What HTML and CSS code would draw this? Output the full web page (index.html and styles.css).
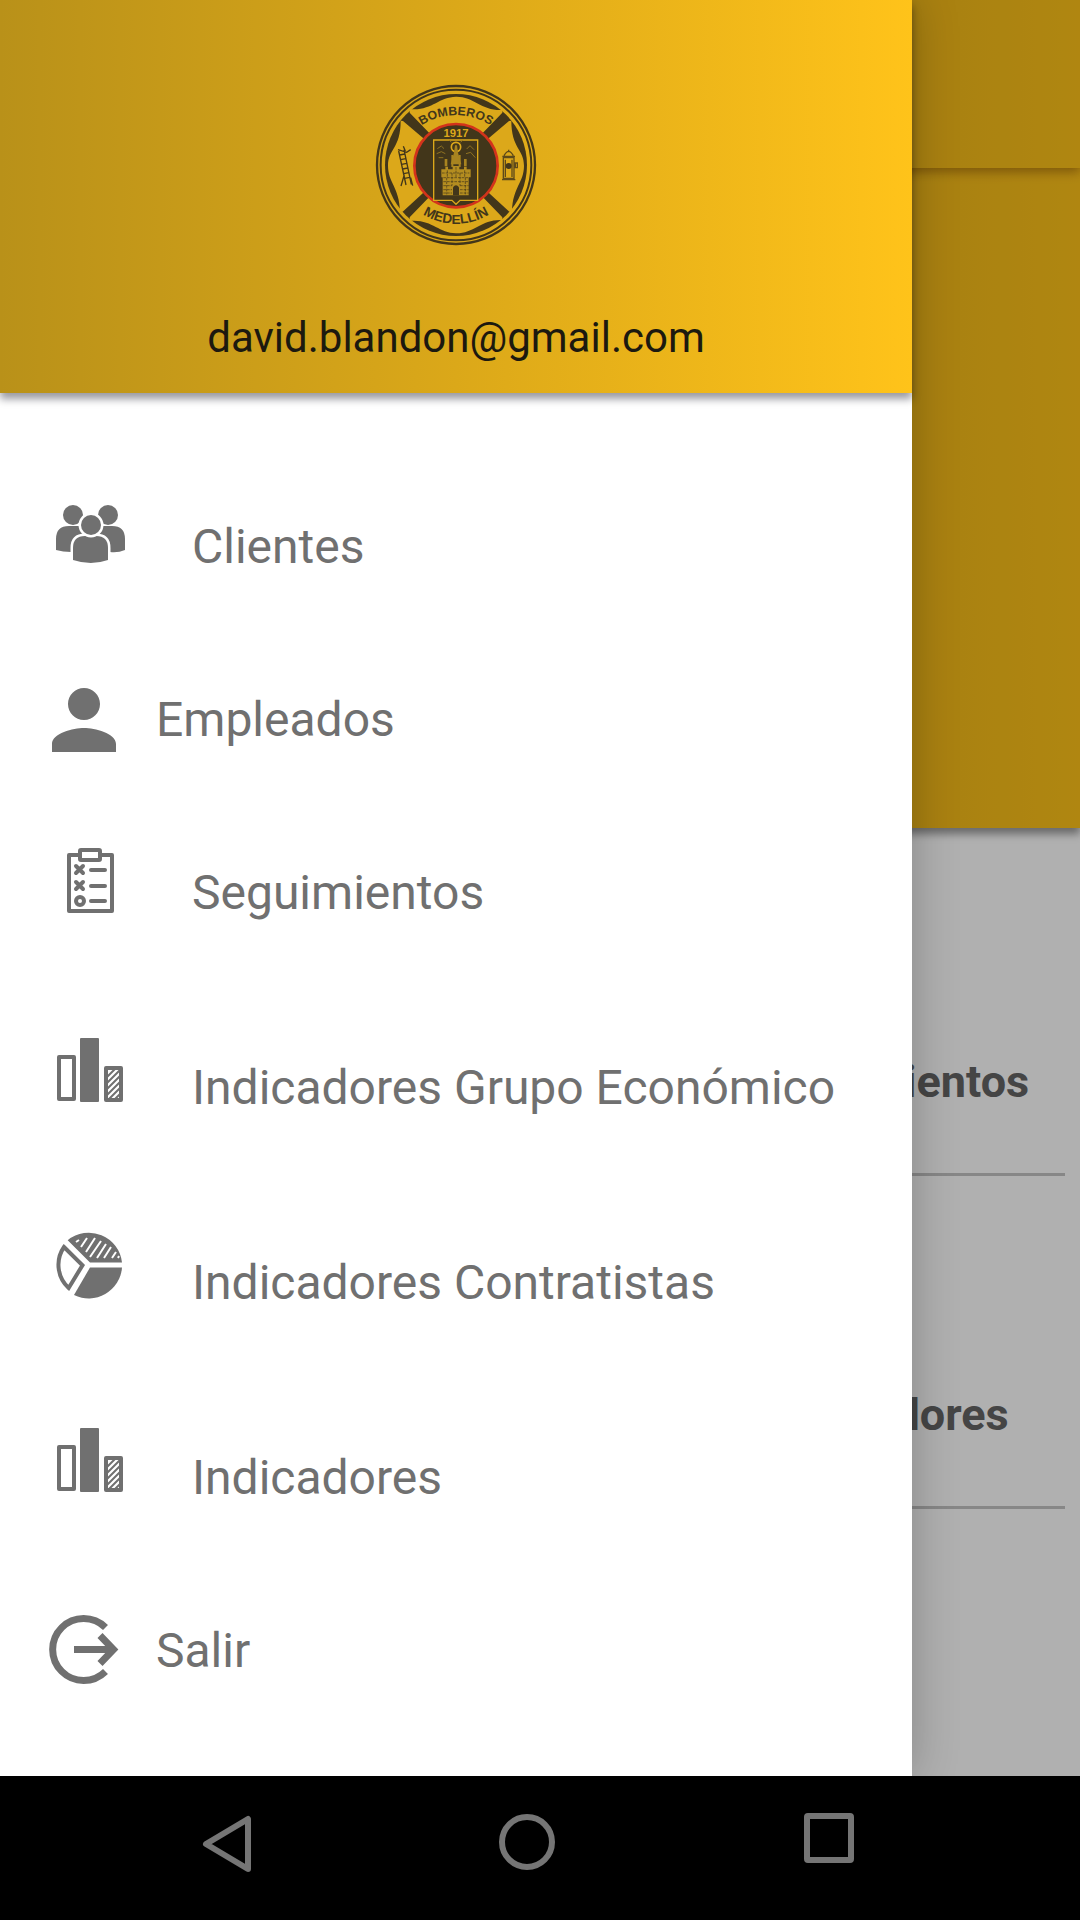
FILE: index.html
```html
<!DOCTYPE html>
<html lang="es">
<head>
    <meta charset="UTF-8">
    <meta name="viewport" content="width=device-width, initial-scale=1.0">
    <title>Bomberos Medellín</title>
    <link rel="stylesheet" href="styles.css">
</head>
<body>
    <svg class="sprite" aria-hidden="true">
        <symbol id="icon-bars" viewBox="0 -3 96 104">
            <rect x="17" y="18" width="15" height="42" fill="none" stroke="currentColor" stroke-width="4" stroke-linejoin="round"/>
            <rect x="38" y="-1" width="19" height="64" rx="1" fill="currentColor"/>
            <rect x="64" y="29" width="15" height="32" fill="none" stroke="currentColor" stroke-width="4" stroke-linejoin="round"/>
            <path d="M65 38l8-8M65 44l13-13M65 50l13-13M65 56l13-13M66 61l12-12M72 61l6-6" stroke="currentColor" stroke-width="2"/>
        </symbol>
    </svg>

    <div class="app">
        <main class="page">
            <div class="toolbar"></div>
            <div class="hero"></div>
            <div class="cards">
                <div class="card">Seguimientos</div>
                <div class="card">Indicadores</div>
            </div>
        </main>
        <div class="scrim"></div>

        <aside class="drawer">
            <header class="drawer-header">
                <svg class="logo" viewBox="45 41 486 486" role="img" aria-label="Bomberos Medellín">
                    <defs>
                        <path id="arc-top" d="M176 171A190 190 0 0 1 400 171"/>
                        <path id="arc-bottom" d="M174 422A188 188 0 0 0 402 422"/>
                    </defs>
                    <circle cx="288" cy="284" r="237" fill="none" stroke="#42361a" stroke-width="7"/>
                    <circle cx="288" cy="284" r="226" fill="none" stroke="#42361a" stroke-width="6"/>
                    <circle cx="288" cy="284" r="213" fill="#42361a"/>
                    <g fill="#dca81a">
                        <path d="M150 116C215 122 235 80 288 79S365 122 427 119L427 127 369 187H207L149 127Z"/>
                        <path d="M150 452C215 446 235 488 288 489S365 446 427 449L427 441 369 381H207L149 441Z"/>
                        <path d="M122 151C122 235 84 235 84 286S118 350 120 423L128 424 190 367V204L129 152Z"/>
                        <path d="M454 151C454 235 492 235 492 286S458 350 456 423L448 424 386 367V204L447 152Z"/>
                    </g>
                    <circle cx="288" cy="286" r="125" fill="#42361a" stroke="#d3331b" stroke-width="8"/>
                    <g class="logo-text">
                        <text font-size="37"><textPath href="#arc-top" startOffset="50%" text-anchor="middle">BOMBEROS</textPath></text>
                        <text font-size="41"><textPath href="#arc-bottom" startOffset="50%" text-anchor="middle">MEDELLÍN</textPath></text>
                        <text class="logo-year" x="288" y="201" font-size="34" text-anchor="middle">1917</text>
                    </g>
                    <!-- shield with the tower -->
                    <path d="M221 209H353V390H300L288 402 276 390H221Z" fill="#42361a" stroke="#dca81a" stroke-width="4"/>
                    <circle cx="288" cy="230" r="14" fill="none" stroke="#dca81a" stroke-width="5"/>
                    <path d="M285 225h6l3 22 10 35h-32l10-35z" fill="#a88420"/>
                    <path d="M232 235l12-8 8 8M230 250l14-6 12 6M236 262l14 0M320 236l10-10 12 12M318 250l14-4 14 16M302 216l5-6M274 216l-5-6" fill="none" stroke="#8f7222" stroke-width="3"/>
                    <path d="M244 297h12v-8h8v8h14v-10h20v10h14v-8h8v8h12v24h-6v54h-78v-54h-4z" fill="#b48d20"/>
                    <path d="M254 266h8v22h-8zM274 254h6v36h-6zM296 254h6v36h-6zM312 266h8v22h-8z" fill="#a88420"/>
                    <path d="M279 375v-24q9-12 18 0v24z" fill="#42361a"/>
                    <path d="M246 308h82M250 322h76M250 334h76M250 346h26M300 346h26M250 358h26M300 358h26M250 368h26M300 368h26M262 300v20M276 308v38M300 308v38M314 300v20M260 322v50M316 322v50M288 290v30" stroke="#42361a" stroke-width="2" stroke-dasharray="8 3"/>
                    <!-- ladder -->
                    <path d="M116 242l22 102M132 238l22 104M119 254l15-3M122 268l15-3M125 282l15-3M128 296l15-3M131 310l15-3M134 324l15-3M123 347l10-34M114 238l26 8 12-8M130 228l6 14M158 346l-6-24" fill="none" stroke="#42361a" stroke-width="4"/>
                    <!-- hydrant -->
                    <path d="M430 262h32v62h-32zM426 328h40M427 258h38M432 256q14-26 28 0M446 238v8M466 278h6v14h-6zM436 268v52M456 268v52" fill="none" stroke="#5d4a1a" stroke-width="4"/>
                    <circle cx="446" cy="287" r="9" fill="#42361a"/>
                </svg>
                <p class="email">david.blandon@gmail.com</p>
            </header>

            <nav class="menu">
                <a class="item" href="#">
                    <svg class="icon" viewBox="0 -3 96 104" fill="currentColor">
                        <circle cx="31" cy="17" r="10"/>
                        <circle cx="66" cy="17" r="10"/>
                        <path d="M14 52V41Q14 28 27 28H70Q83 28 83 41V52Q76 55 68 54H29Q21 54 14 52Z"/>
                        <path d="M31 62V50Q31 38 43 38H54Q66 38 66 50V62Q49 68 31 62Z" stroke="#fff" stroke-width="5" paint-order="stroke"/>
                        <circle cx="49" cy="27" r="10" stroke="#fff" stroke-width="5" paint-order="stroke"/>
                    </svg>
                    Clientes
                </a>
                <a class="item small" href="#">
                    <svg class="icon" viewBox="3 3 18 18" fill="currentColor">
                        <path d="M12 12c2.21 0 4-1.79 4-4s-1.79-4-4-4-4 1.79-4 4 1.79 4 4 4zm0 2c-2.67 0-8 1.34-8 4v2h16v-2c0-2.66-5.33-4-8-4z"/>
                    </svg>
                    Empleados
                </a>
                <a class="item" href="#">
                    <svg class="icon" viewBox="0 -3 96 104" fill="none" stroke="currentColor" stroke-width="4" stroke-linecap="round" stroke-linejoin="round">
                        <path d="M38 11H27V67H70V11H59"/>
                        <rect x="38" y="6" width="20" height="10" rx="1"/>
                        <path d="M34 22l7 7M41 22l-7 7M34 38l7 7M41 38l-7 7M49 26H63M49 42H63M49 57H63"/>
                        <circle cx="38" cy="57" r="4"/>
                    </svg>
                    Seguimientos
                </a>
                <a class="item" href="#">
                    <svg class="icon"><use href="#icon-bars"/></svg>
                    Indicadores Grupo Económico
                </a>
                <a class="item" href="#">
                    <svg class="icon" viewBox="0 -3 96 104" fill="currentColor">
                        <path d="M48 33.500H80A33.400 33.400 0 0 1 32 61Z"/>
                        <path d="M25.700 6.200A33.400 33.400 0 0 1 80 28.500H48Z"/>
                        <path d="M34 8l3-2M39 13l6-9M44 18l9-14M48 23l11-16M55 24l9-14M62 24l7-11M70 24l4-6M76 24l1-2" stroke="#fff" stroke-width="2"/>
                        <path d="M22 13L40.500 31.200 26.700 54A31.400 31.400 0 0 1 22 13Z" fill="none" stroke="currentColor" stroke-width="4"/>
                    </svg>
                    Indicadores Contratistas
                </a>
                <a class="item" href="#">
                    <svg class="icon"><use href="#icon-bars"/></svg>
                    Indicadores
                </a>
                <a class="item small" href="#">
                    <svg class="icon" viewBox="0 1 72 72" fill="none" stroke="currentColor" stroke-width="7">
                        <path d="M57.500 13.500A31 31 0 1 0 57.500 57.500"/>
                        <path d="M26 35.500H65M52 21.500l13.500 14L52 49.500"/>
                    </svg>
                    Salir
                </a>
            </nav>
        </aside>
    </div>

    <div class="navbar">
        <button class="nav-button" aria-label="Atrás">
            <svg viewBox="0 0 60 60"><path d="M50 7V57L8 32Z"/></svg>
        </button>
        <button class="nav-button" aria-label="Inicio">
            <svg viewBox="0 0 60 60"><circle cx="29" cy="30" r="25"/></svg>
        </button>
        <button class="nav-button" aria-label="Recientes">
            <svg viewBox="0 0 60 60"><rect x="9" y="4" width="44" height="44" rx="1"/></svg>
        </button>
    </div>
</body>
</html>
```

FILE: styles.css
```css
* {
    box-sizing: border-box;
}
body {
    margin: 0;
    min-height: 100vh;
    display: flex;
    flex-direction: column;
    font-family: Roboto, sans-serif;
    background: #000;
}
.sprite {
    display: none;
}
.app {
    flex: 1;
    position: relative;
    display: flex;
    overflow: hidden;
}

/* page under the drawer */
.page {
    flex: 1;
    background: #fff;
}
.toolbar,
.hero,
.drawer-header {
    background: linear-gradient(to right, #b99119, #dba819 50%, #ffc31a);
}
.toolbar {
    position: relative;
    height: 168px;
    box-shadow: 0 4px 10px rgba(80, 30, 0, 0.4);
}
.hero {
    height: 660px;
    box-shadow: 0 6px 8px rgba(0, 0, 0, 0.4);
}
.cards {
    display: grid;
    grid-template-columns: 350px;
    grid-auto-rows: 333px;
    justify-content: end;
    padding: 15px;
}
.card {
    display: flex;
    align-items: flex-end;
    justify-content: center;
    padding-bottom: 65px;
    border-bottom: 3px solid #c4c4c4;
    color: #646464;
    font-size: 45px;
    line-height: 52px;
    font-weight: bold;
}
.scrim {
    position: absolute;
    inset: 0;
    background: rgba(0, 0, 0, 0.31);
}

/* drawer */
.drawer {
    position: absolute;
    top: 0;
    bottom: 0;
    left: 0;
    width: calc(100% - 168px);
    background: #fff;
    box-shadow: 0 0 44px rgba(0, 0, 0, 0.24);
}
.drawer-header {
    display: flex;
    flex-direction: column;
    align-items: center;
    gap: 66px;
    padding: 84px 24px 29px;
    box-shadow: 0 6px 8px rgba(0, 0, 20, 0.4);
}
.logo {
    width: 162px;
    height: 162px;
}
.logo-text {
    fill: #42361a;
    font-family: "Liberation Sans", Arial, sans-serif;
    font-weight: bold;
}
.logo-year {
    fill: #dca81a;
}
.email {
    margin: 0;
    color: #1c190f;
    font-size: 42px;
    line-height: 52px;
}
.menu {
    padding-top: 56px;
}
.item {
    display: flex;
    align-items: center;
    gap: 54px;
    height: 195px;
    padding-left: 42px;
    color: #707070;
    font-size: 48px;
    text-decoration: none;
}
.icon {
    width: 96px;
    height: 104px;
}
.small {
    gap: 36px;
    height: 151px;
    padding-left: 48px;
}
.small .icon {
    width: 72px;
    height: 72px;
}

/* system buttons */
.navbar {
    display: flex;
    justify-content: center;
    gap: 240px;
    height: 144px;
    padding: 36px 24px 48px 0;
}
.nav-button {
    width: 60px;
    height: 60px;
    padding: 0;
    border: none;
    background: none;
    cursor: pointer;
}
.nav-button svg {
    width: 60px;
    height: 60px;
    fill: none;
    stroke: #757575;
    stroke-width: 6;
    stroke-linejoin: round;
}
```
